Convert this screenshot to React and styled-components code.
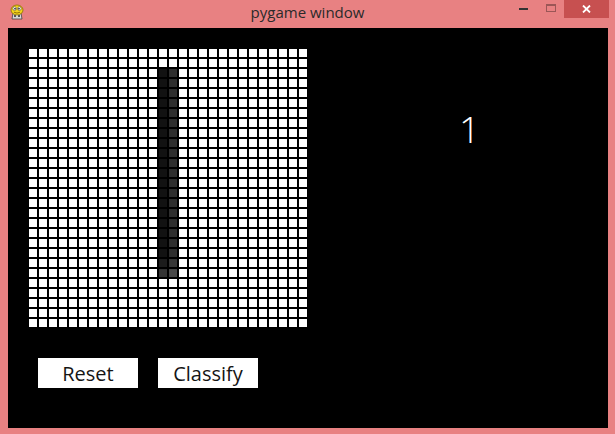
import React from "react";
import styled, { createGlobalStyle } from "styled-components";

const Global = createGlobalStyle`
  html, body { margin: 0; padding: 0; overflow: hidden; background: #e88182; }
  * { box-sizing: border-box; }
`;

const Window = styled.div`
  width: 615px;
  height: 434px;
  background: #e88182;
  display: flex;
  flex-direction: column;
  font-family: "Open Sans", "Noto Sans", sans-serif;
`;

const TitleBar = styled.div`
  height: 28px;
  display: grid;
  grid-template-columns: 1fr auto 1fr;
  align-items: start;
`;

const AppIcon = styled.svg`
  margin: 4px 0 0 10px;
  display: block;
`;

const Title = styled.div`
  font-size: 15px;
  line-height: 20px;
  padding-top: 2px;
  color: #2a2a2a;
  white-space: nowrap;
`;

const Controls = styled.div`
  display: flex;
  justify-content: flex-end;
  align-items: flex-start;
  padding-right: 6px;
`;

const CtrlButton = styled.div`
  width: ${(p) => p.$w}px;
  height: 18px;
  display: flex;
  justify-content: center;
  align-items: ${(p) => (p.$top ? "flex-start" : "center")};
  padding-top: ${(p) => p.$top || 0}px;
  background: ${(p) => p.$bg || "transparent"};
`;

const MinDash = styled.div`
  width: 9px;
  height: 2px;
  background: #333;
`;

const MaxBox = styled.div`
  width: 10px;
  height: 8px;
  border: 1px solid #9b5656;
  border-top-width: 2px;
`;

const Canvas = styled.div`
  width: 600px;
  height: 400px;
  margin: 0 7px 6px 8px;
  background: #000;
  padding: 21px 0 0 21px;
  display: flex;
  flex-direction: column;
`;

const TopRow = styled.div`
  display: flex;
  align-items: flex-start;
`;

const Grid = styled.div`
  display: grid;
  grid-template-columns: repeat(28, 8px);
  grid-auto-rows: 8px;
  gap: 2px;
`;

const Cell = styled.div`
  background: ${(p) => p.$c};
`;

const Result = styled.div`
  margin: 62px 0 0 152px;
  font-size: 37px;
  font-weight: 300;
  line-height: 36px;
  color: #fff;
`;

const ButtonRow = styled.div`
  display: flex;
  gap: 20px;
  margin-top: 31px;
  padding-left: 9px;
`;

const Button = styled.div`
  width: 100px;
  height: 30px;
  background: #fff;
  color: #151515;
  font-size: 20px;
  display: flex;
  align-items: center;
  justify-content: center;
`;

function cellColor(r, c) {
  if (r >= 2 && r <= 22 && (c === 13 || c === 14)) {
    if (r === 22) return c === 13 ? "#333" : "#474747";
    if (r === 21) return c === 13 ? "#1c1c1c" : "#363636";
    return c === 13 ? "#121212" : "#2e2e2e";
  }
  return "#fff";
}

const cells = [];
for (let r = 0; r < 28; r++) {
  for (let c = 0; c < 28; c++) {
    cells.push({ key: `${r}-${c}`, color: cellColor(r, c) });
  }
}

function PygameIcon() {
  return (
    <AppIcon width="14" height="17" viewBox="0 0 14 17">
      <path d="M3 9 L11 9 L12 15 L2 15 Z" fill="#d8d8d8" stroke="#444" strokeWidth="0.8" />
      <rect x="4" y="11" width="2" height="2" fill="#555" />
      <rect x="8" y="11" width="2" height="2" fill="#555" />
      <ellipse cx="7" cy="6" rx="6" ry="5" fill="#f2d21b" stroke="#8a6d00" strokeWidth="0.8" />
      <circle cx="4.6" cy="4.6" r="1.8" fill="#fff" stroke="#333" strokeWidth="0.5" />
      <circle cx="9.4" cy="4.6" r="1.8" fill="#fff" stroke="#333" strokeWidth="0.5" />
      <circle cx="5" cy="4.8" r="0.8" fill="#000" />
      <circle cx="9" cy="4.8" r="0.8" fill="#000" />
      <path d="M4 8.2 Q7 10 10 8.2" stroke="#7a5a00" strokeWidth="0.8" fill="none" />
    </AppIcon>
  );
}

export default function App() {
  return (
    <>
      <Global />
      <Window>
        <TitleBar>
          <div>
            <PygameIcon />
          </div>
          <Title>pygame window</Title>
          <Controls>
            <CtrlButton $w={27}>
              <MinDash />
            </CtrlButton>
            <CtrlButton $w={27} $top={4}>
              <MaxBox />
            </CtrlButton>
            <CtrlButton $w={45} $bg="#c75050">
              <svg width="9" height="8" viewBox="0 0 9 8">
                <path d="M1 0.5 L8 7.5 M8 0.5 L1 7.5" stroke="#fff" strokeWidth="1.8" />
              </svg>
            </CtrlButton>
          </Controls>
        </TitleBar>
        <Canvas>
          <TopRow>
            <Grid>
              {cells.map((cell) => (
                <Cell key={cell.key} $c={cell.color} />
              ))}
            </Grid>
            <Result>1</Result>
          </TopRow>
          <ButtonRow>
            <Button>Reset</Button>
            <Button>Classify</Button>
          </ButtonRow>
        </Canvas>
      </Window>
    </>
  );
}
